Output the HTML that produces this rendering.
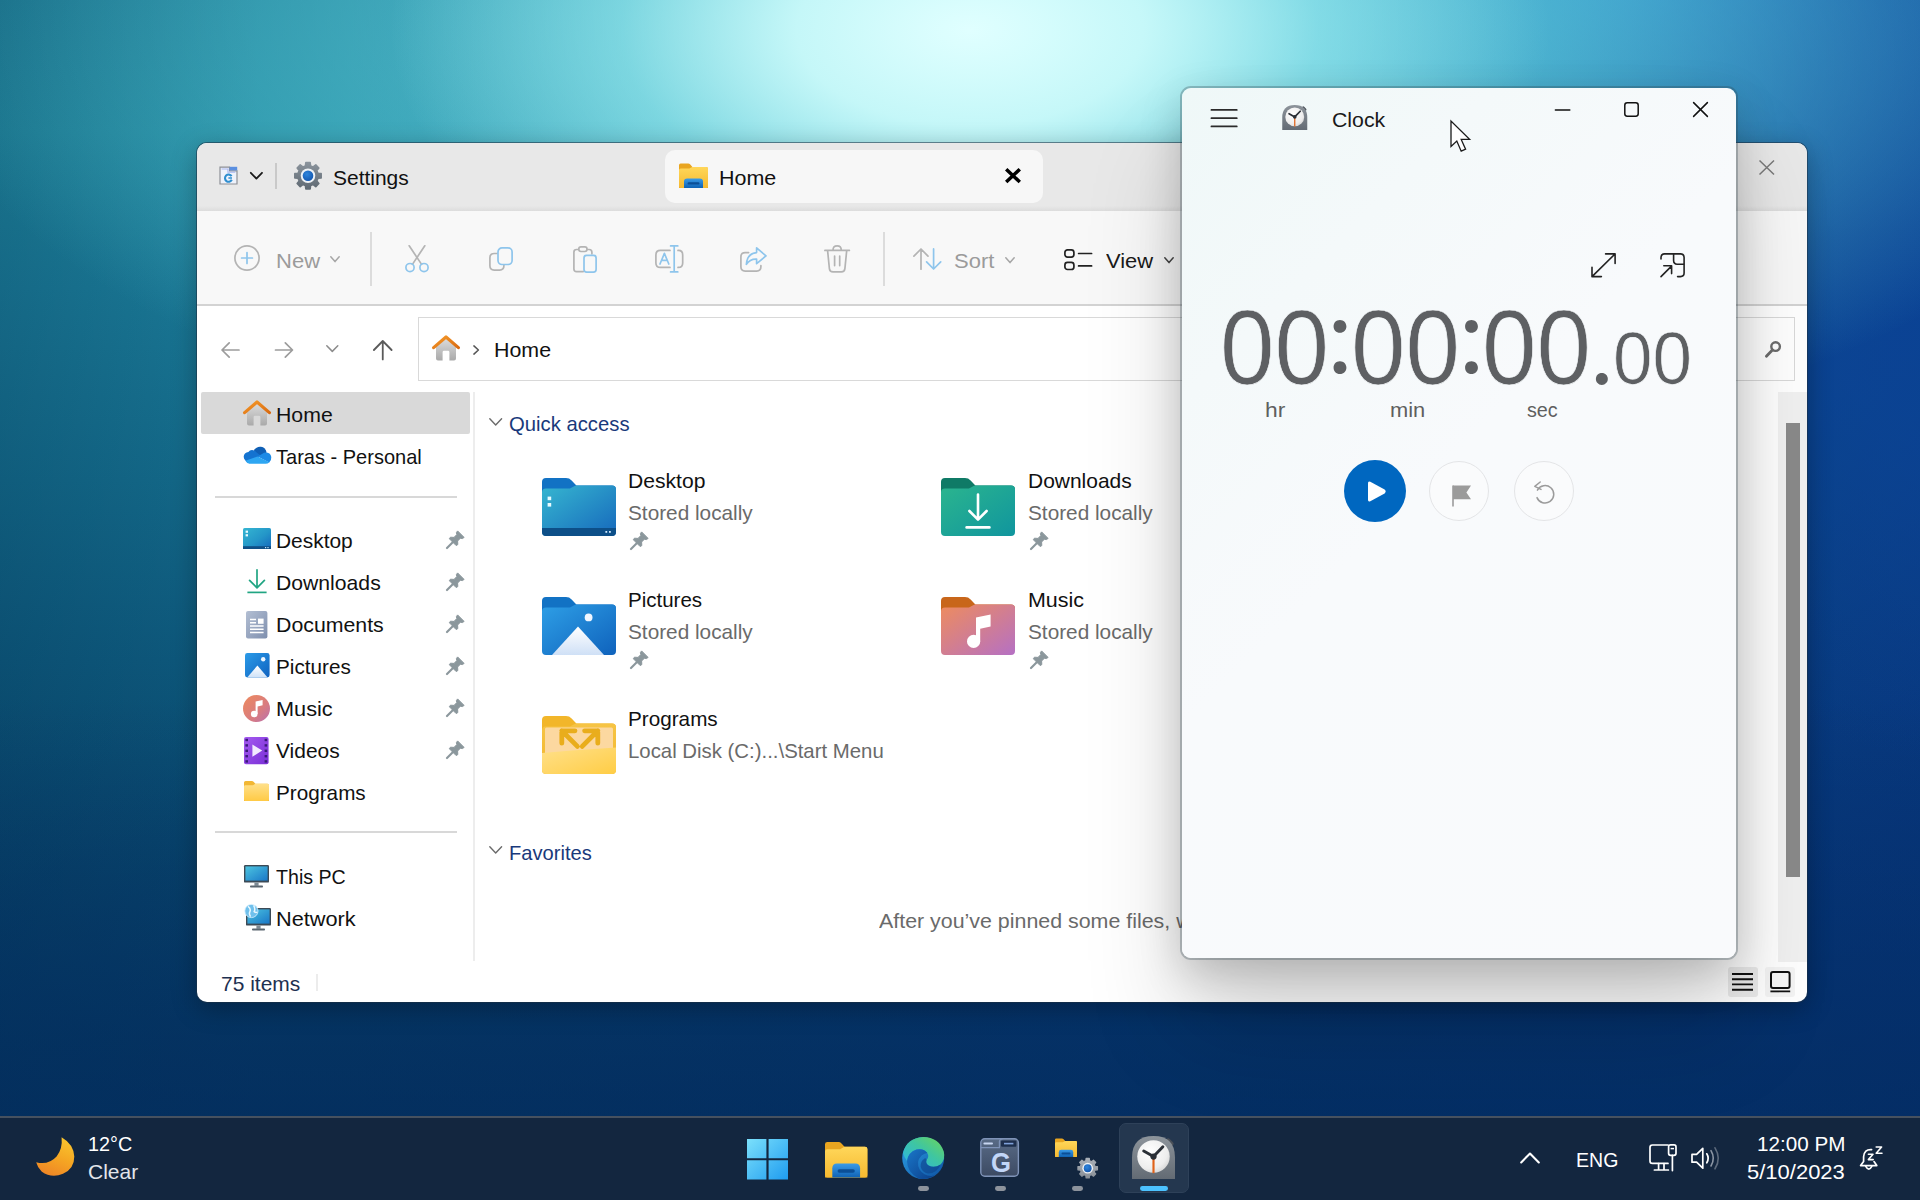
<!DOCTYPE html><html lang="en"><head><meta charset="utf-8"><title>Desktop</title><style>
*{box-sizing:border-box;margin:0;padding:0}
html,body{width:1920px;height:1200px;overflow:hidden;background:#03315e}
body{position:relative;font-family:"Liberation Sans",sans-serif}
.a{position:absolute}
.pg{position:absolute;width:1920px;height:1200px}
.t{position:absolute;white-space:nowrap;line-height:1;transform-origin:0 0;font-family:"Liberation Sans",sans-serif}
svg{position:absolute;overflow:visible}
#wall{left:0;top:0;width:1920px;height:1200px;
 background:
  radial-gradient(ellipse 580px 320px at 970px 30px, rgba(224,255,255,1) 0%, rgba(205,251,251,.92) 30%, rgba(160,238,242,.55) 60%, rgba(120,220,230,0) 100%),
  radial-gradient(ellipse 1120px 450px at 1040px 40px, rgba(125,228,234,.95) 0%, rgba(95,205,218,.72) 42%, rgba(60,170,195,0) 100%),
  radial-gradient(ellipse 470px 560px at 2000px 210px, rgba(10,66,152,.92) 0%, rgba(11,68,154,.62) 45%, rgba(12,72,156,0) 100%),
  radial-gradient(ellipse 620px 260px at 1640px -10px, rgba(44,150,232,.62) 0%, rgba(44,150,232,.35) 50%, rgba(44,150,232,0) 100%),
  linear-gradient(to bottom, rgba(3,44,96,0) 0%, rgba(3,44,96,0) 58%, rgba(3,46,98,.55) 82%, rgba(3,44,94,.85) 100%),
  linear-gradient(to right, rgba(6,44,128,0) 0%, rgba(6,44,128,0) 18%, rgba(6,44,128,.30) 50%, rgba(7,48,132,.64) 86%, rgba(6,46,128,.74) 100%),
  linear-gradient(to right, rgba(0,40,70,.22) 0, rgba(0,40,70,0) 260px),
  linear-gradient(to bottom, #1d7f98 0%, #20889f 11%, #1b7b98 24%, #146b8b 40%, #0e5a7e 55%, #0a4a70 70%, #073c63 85%, #05335b 100%);}
#exp{left:197px;top:143px;width:1610px;height:859px;border-radius:10px;background:#fff;overflow:hidden}
#expsh{left:197px;top:143px;width:1610px;height:859px;border-radius:10px;
 box-shadow:0 0 0 1px rgba(30,50,70,.55),0 6px 26px rgba(0,0,0,.30)}
#clk{left:1182px;top:88px;width:554px;height:870px;border-radius:9px;overflow:hidden;
 background:linear-gradient(135deg,#eff8f8 0%,#f4f9fa 22%,#f8fafc 45%,#f9fafc 100%)}
#clksh{left:1182px;top:88px;width:554px;height:870px;border-radius:9px;
 box-shadow:0 0 0 2px rgba(50,70,78,.30),0 14px 44px rgba(0,0,0,.20),0 70px 100px rgba(0,0,0,.16)}
#tb{left:0;top:1116px;width:1920px;height:84px;background:#13263f;border-top:2px solid #46515f;overflow:hidden}
</style></head><body><div class="a" id="wall"></div><div class="a" id="expsh"></div><div class="a" id="exp"><div class="pg" style="left:-197px;top:-143px"><div class="a" style="left:197px;top:143px;width:1610px;height:67px;background:#e8e8e8"></div>
<div class="a" style="left:197px;top:206px;width:1610px;height:5px;background:linear-gradient(#e8e8e8,#dcdcdc)"></div>
<div class="a" style="left:197px;top:211px;width:1610px;height:93px;background:#f8f8f8"></div>
<div class="a" style="left:197px;top:304px;width:1610px;height:2px;background:#d3d3d3"></div>
<div class="a" style="left:665px;top:150px;width:378px;height:53px;border-radius:10px;background:#f7f7f7"></div>
<span class="t" style="left:333.03px;top:167.12px;font-size:21.00px;color:#111;transform:scaleX(0.9979);">Settings</span>
<span class="t" style="left:718.73px;top:166.82px;font-size:21.00px;color:#111;transform:scaleX(1.0214);">Home</span>
<span class="t" style="left:275.53px;top:249.72px;font-size:21.00px;color:#9b9b9b;transform:scaleX(1.0479);">New</span>
<span class="t" style="left:954.43px;top:250.02px;font-size:21.00px;color:#9b9b9b;transform:scaleX(1.0471);">Sort</span>
<span class="t" style="left:1106.03px;top:250.02px;font-size:21.00px;color:#1a1a1a;transform:scaleX(1.0441);">View</span>
<div class="a" style="left:370px;top:232px;width:1.5px;height:54px;background:#dcdcdc"></div>
<div class="a" style="left:883px;top:232px;width:1.5px;height:54px;background:#dcdcdc"></div>
<div class="a" style="left:418px;top:317px;width:1377px;height:64px;border:1px solid #d9d9d9;background:#fff"></div>
<span class="t" style="left:494.28px;top:339.22px;font-size:21.00px;color:#111;transform:scaleX(1.0178);">Home</span>
<div class="a" style="left:201px;top:392px;width:269px;height:42px;background:#d9d9d9;border-radius:2px"></div>
<div class="a" style="left:215px;top:496px;width:242px;height:2px;background:#d8d8d8"></div>
<div class="a" style="left:215px;top:831px;width:242px;height:2px;background:#d8d8d8"></div>
<div class="a" style="left:473px;top:392px;width:1.5px;height:569px;background:#ededed"></div>
<span class="t" style="left:275.83px;top:403.92px;font-size:21.00px;color:#111;transform:scaleX(1.0125);">Home</span>
<span class="t" style="left:275.83px;top:445.52px;font-size:21.00px;color:#111;transform:scaleX(0.9531);">Taras - Personal</span>
<span class="t" style="left:275.83px;top:529.72px;font-size:21.00px;color:#111;transform:scaleX(0.9959);">Desktop</span>
<span class="t" style="left:275.83px;top:571.72px;font-size:21.00px;color:#111;transform:scaleX(1.0079);">Downloads</span>
<span class="t" style="left:275.83px;top:613.72px;font-size:21.00px;color:#111;transform:scaleX(1.0142);">Documents</span>
<span class="t" style="left:275.83px;top:655.72px;font-size:21.00px;color:#111;transform:scaleX(0.9851);">Pictures</span>
<span class="t" style="left:275.83px;top:697.72px;font-size:21.00px;color:#111;transform:scaleX(1.0344);">Music</span>
<span class="t" style="left:275.83px;top:739.72px;font-size:21.00px;color:#111;transform:scaleX(0.9982);">Videos</span>
<span class="t" style="left:275.83px;top:781.72px;font-size:21.00px;color:#111;transform:scaleX(0.9857);">Programs</span>
<span class="t" style="left:275.83px;top:865.72px;font-size:21.00px;color:#111;transform:scaleX(0.9336);">This PC</span>
<span class="t" style="left:275.83px;top:907.72px;font-size:21.00px;color:#111;transform:scaleX(1.0350);">Network</span>
<span class="t" style="left:509.33px;top:413.42px;font-size:21.00px;color:#19397b;transform:scaleX(0.9652);">Quick access</span>
<span class="t" style="left:509.23px;top:841.62px;font-size:21.00px;color:#19397b;transform:scaleX(0.9580);">Favorites</span>
<span class="t" style="left:628.33px;top:470.12px;font-size:21.00px;color:#111;transform:scaleX(1.0050);">Desktop</span>
<span class="t" style="left:628.33px;top:502.12px;font-size:21.00px;color:#6a6a6a;transform:scaleX(0.9894);">Stored locally</span>
<span class="t" style="left:1027.73px;top:470.12px;font-size:21.00px;color:#111;transform:scaleX(0.9983);">Downloads</span>
<span class="t" style="left:1027.73px;top:502.12px;font-size:21.00px;color:#6a6a6a;transform:scaleX(0.9894);">Stored locally</span>
<span class="t" style="left:628.33px;top:589.12px;font-size:21.00px;color:#111;transform:scaleX(0.9772);">Pictures</span>
<span class="t" style="left:628.33px;top:621.12px;font-size:21.00px;color:#6a6a6a;transform:scaleX(0.9894);">Stored locally</span>
<span class="t" style="left:1027.73px;top:589.12px;font-size:21.00px;color:#111;transform:scaleX(1.0216);">Music</span>
<span class="t" style="left:1027.73px;top:621.12px;font-size:21.00px;color:#6a6a6a;transform:scaleX(0.9894);">Stored locally</span>
<span class="t" style="left:628.33px;top:708.12px;font-size:21.00px;color:#111;transform:scaleX(0.9857);">Programs</span>
<span class="t" style="left:628.33px;top:740.12px;font-size:21.00px;color:#6a6a6a;transform:scaleX(0.9696);">Local Disk (C:)...\Start Menu</span>
<span class="t" style="left:879.03px;top:910.22px;font-size:21.00px;color:#6a6a6a;transform:scaleX(1.0182);">After you’ve pinned some files, we’ll show them here.</span>
<span class="t" style="left:220.53px;top:972.72px;font-size:21.00px;color:#1d3050;transform:scaleX(0.9994);">75 items</span>
<div class="a" style="left:316px;top:974px;width:1.5px;height:17px;background:#ececec"></div>
<div class="a" style="left:1778px;top:392px;width:29px;height:570px;background:#f1f1f1"></div>
<div class="a" style="left:1785.5px;top:422.5px;width:14.5px;height:454.5px;background:#8a8a8a"></div>
<svg style="left:219px;top:166px" width="19" height="19" viewBox="0 0 19 19" ><path d="M1 1.2h9.5v3.6H18V18H1z" fill="#eef2fb" stroke="#8d8f96" stroke-width="1.2"/><rect x="10.6" y="0.8" width="7.6" height="3.6" fill="#5b8fe0"/><path d="M2.6 3h6.3v3.3h7.4" fill="none" stroke="#a9b8f2" stroke-width="1.1"/><path d="M12.6 10.2a3.6 3.6 0 1 0 .2 3.6" fill="none" stroke="#2f8fd0" stroke-width="2.1"/><path d="M9.4 12h3.6" stroke="#2f8fd0" stroke-width="1.6"/></svg>
<svg style="left:250px;top:172px" width="13" height="8" viewBox="0 0 13 8" ><path d="M0.8 0.8 6.4 6.6 12 0.8" fill="none" stroke="#1a1a1a" stroke-width="1.8" stroke-linecap="round" stroke-linejoin="round"/></svg>
<div class="a" style="left:275px;top:163px;width:1.6px;height:26px;background:#c9c9c9"></div>
<svg style="left:294px;top:162px" width="28" height="27.5" viewBox="0 0 28 28" ><defs><linearGradient id="gg1" x1="0" y1="0" x2="0" y2="1"><stop offset="0" stop-color="#8a939c"/><stop offset="1" stop-color="#5f6972"/></linearGradient><radialGradient id="gg2" cx=".4" cy=".35" r=".8"><stop offset="0" stop-color="#2f86dd"/><stop offset="1" stop-color="#0f4fa8"/></radialGradient></defs><path d="M11.37 3.94 L11.79 0.58 L16.21 0.58 L16.63 3.94 L19.26 5.03 L21.92 2.95 L25.05 6.08 L22.97 8.74 L24.06 11.37 L27.42 11.79 L27.42 16.21 L24.06 16.63 L22.97 19.26 L25.05 21.92 L21.92 25.05 L19.26 22.97 L16.63 24.06 L16.21 27.42 L11.79 27.42 L11.37 24.06 L8.74 22.97 L6.08 25.05 L2.95 21.92 L5.03 19.26 L3.94 16.63 L0.58 16.21 L0.58 11.79 L3.94 11.37 L5.03 8.74 L2.95 6.08 L6.08 2.95 L8.74 5.03Z" fill="url(#gg1)" stroke="url(#gg1)" stroke-width="1.6" stroke-linejoin="round"/><circle cx="14" cy="14" r="7.4" fill="#eef2f6"/><circle cx="14" cy="14" r="5.4" fill="url(#gg2)"/></svg>
<svg style="left:679px;top:163px" width="29" height="25" viewBox="0 0 29 25" ><defs><linearGradient id="fe1" x1="0" y1="0" x2="0" y2="1"><stop offset="0" stop-color="#ffd75a"/><stop offset="1" stop-color="#f6b930"/></linearGradient><linearGradient id="fe2" x1="0" y1="0" x2="0" y2="1"><stop offset="0" stop-color="#3a9be8"/><stop offset="1" stop-color="#0f62b4"/></linearGradient></defs><path d="M0 2.2Q0 .6 1.6 .6H9.2Q10.4 .6 11.3 1.6L13.4 3.9H27.2Q29 3.9 29 5.6V25H0Z" fill="#e9a520"/><path d="M0 7.2Q0 5.6 1.6 5.6H10.4L13.2 3.9H27.4Q29 3.9 29 5.5V23.4Q29 25 27.4 25H1.6Q0 25 0 23.4Z" fill="url(#fe1)"/><path d="M5 25V18.6Q5 15.4 8.2 15.4H20.8Q24 15.4 24 18.6V25Z" fill="url(#fe2)"/><rect x="8.6" y="19.2" width="11.8" height="2.4" rx="1.2" fill="#0b4f97"/></svg>
<svg style="left:1004.6px;top:167.8px" width="16" height="15.2" viewBox="0 0 16 15.2" ><path d="M1.2 1.2 14.8 14M14.8 1.2 1.2 14" stroke="#000" stroke-width="3.5" stroke-linecap="butt"/></svg>
<svg style="left:1758.75px;top:160px" width="15.5" height="15" viewBox="0 0 15.5 15" ><path d="M.5 .5 15 14.5M15 .5 .5 14.5" stroke="#7a7a7a" stroke-width="1.5"/></svg>
<svg style="left:234px;top:245px" width="26" height="26" viewBox="0 0 26 26" ><circle cx="13" cy="13" r="12.1" fill="none" stroke="#b4b4b4" stroke-width="1.7"/><path d="M13 7.6V18.4M7.6 13H18.4" stroke="#8ec5ec" stroke-width="1.7" stroke-linecap="round"/></svg>
<svg style="left:330px;top:256px" width="10" height="7" viewBox="0 0 10 7" ><path d="M.8 .8 5 5.6 9.2 .8" fill="none" stroke="#a6a6a6" stroke-width="1.5" stroke-linecap="round" stroke-linejoin="round"/></svg>
<svg style="left:405px;top:245px" width="24" height="27.5" viewBox="0 0 24 27.5" ><path d="M4.2 .8 16.6 19.4M19.8 .8 7.4 19.4" stroke="#b4b4b4" stroke-width="1.7" stroke-linecap="round"/><circle cx="5" cy="22.6" r="4.1" fill="none" stroke="#8ec5ec" stroke-width="1.7"/><circle cx="19" cy="22.6" r="4.1" fill="none" stroke="#8ec5ec" stroke-width="1.7"/></svg>
<svg style="left:489px;top:247px" width="24" height="24" viewBox="0 0 24 24" ><path d="M8 6.5H5.2Q.9 6.5 .9 10.8V18.8Q.9 23.1 5.2 23.1H10.6Q14.9 23.1 14.9 18.8V18.2" fill="none" stroke="#b4b4b4" stroke-width="1.7" stroke-linecap="round"/><rect x="9" y=".9" width="14.1" height="16.6" rx="4" fill="none" stroke="#8ec5ec" stroke-width="1.7"/></svg>
<svg style="left:573px;top:245.5px" width="24" height="27" viewBox="0 0 24 27" ><path d="M10.2 25.6H3.6Q.9 25.6 .9 22.9V6.2Q.9 3.5 3.6 3.5H5.6M14 3.5H16.2Q18.9 3.5 18.9 6.2V7.8" fill="none" stroke="#b4b4b4" stroke-width="1.7" stroke-linecap="round"/><rect x="5.8" y=".9" width="8.2" height="4.6" rx="2.2" fill="#f8f8f8" stroke="#b4b4b4" stroke-width="1.7"/><rect x="11" y="9.4" width="12.1" height="16.7" rx="2.6" fill="none" stroke="#8ec5ec" stroke-width="1.7"/></svg>
<svg style="left:654.6px;top:245px" width="28.6" height="27.8" viewBox="0 0 28.6 27.8" ><path d="M15 5.4H5.4Q.9 5.4 .9 9.9V17.9Q.9 22.4 5.4 22.4H15M23 5.4H23.4Q27.7 5.4 27.7 9.9V17.9Q27.7 22.4 23.4 22.4H23" fill="none" stroke="#b4b4b4" stroke-width="1.7" stroke-linecap="round"/><path d="M19.2 .9V26.9M15.6 .9H22.8M15.6 26.9H22.8" stroke="#8ec5ec" stroke-width="1.7" stroke-linecap="round"/><path d="M5 19 9.4 8.4 13.8 19M6.6 15.4H12.2" fill="none" stroke="#8ec5ec" stroke-width="1.7" stroke-linecap="round" stroke-linejoin="round"/></svg>
<svg style="left:740px;top:246.5px" width="27" height="25" viewBox="0 0 27 25" ><path d="M8.6 5.6H5.2Q.9 5.6 .9 9.9V19.8Q.9 24.1 5.2 24.1H16.6Q20.9 24.1 20.9 19.8V18.6" fill="none" stroke="#b4b4b4" stroke-width="1.7" stroke-linecap="round"/><path d="M16.6 .9 26 8.9 16.6 16.7V12.2Q10 11.8 6.4 17.4Q7 6.6 16.6 5.6Z" fill="none" stroke="#8ec5ec" stroke-width="1.7" stroke-linejoin="round"/></svg>
<svg style="left:823.7px;top:245px" width="26.3" height="27.8" viewBox="0 0 26.3 27.8" ><path d="M.9 5.4H25.4M9 5.2Q9 .9 13.15 .9Q17.3 .9 17.3 5.2M3.6 5.6 5.4 23.6Q5.7 26.9 9 26.9H17.3Q20.6 26.9 20.9 23.6L22.7 5.6M10.6 11V20.6M15.7 11V20.6" fill="none" stroke="#b4b4b4" stroke-width="1.7" stroke-linecap="round"/></svg>
<svg style="left:912.7px;top:248px" width="28.6" height="22" viewBox="0 0 28.6 22" ><path d="M8 21.2V1.4M.9 8.2 8 1 15 8.2" fill="none" stroke="#b4b4b4" stroke-width="1.7" stroke-linecap="round" stroke-linejoin="round"/><path d="M20.6 .9V20.6M13.6 13.8 20.6 21 27.7 13.8" fill="none" stroke="#8ec5ec" stroke-width="1.7" stroke-linecap="round" stroke-linejoin="round"/></svg>
<svg style="left:1005px;top:256.5px" width="10" height="7" viewBox="0 0 10 7" ><path d="M.8 .8 5 5.6 9.2 .8" fill="none" stroke="#a6a6a6" stroke-width="1.5" stroke-linecap="round" stroke-linejoin="round"/></svg>
<svg style="left:1064.4px;top:248.6px" width="28.6" height="21.4" viewBox="0 0 28.6 21.4" ><rect x=".9" y=".9" width="9" height="7.2" rx="2.6" fill="none" stroke="#222" stroke-width="1.7"/><rect x=".9" y="13.3" width="9" height="7.2" rx="2.6" fill="none" stroke="#222" stroke-width="1.7"/><path d="M14.6 4.5H27.6M14.6 16.9H27.6" stroke="#222" stroke-width="1.7" stroke-linecap="round"/></svg>
<svg style="left:1164.4px;top:256.5px" width="10" height="7" viewBox="0 0 10 7" ><path d="M.8 .8 5 5.6 9.2 .8" fill="none" stroke="#444" stroke-width="1.5" stroke-linecap="round" stroke-linejoin="round"/></svg>
<svg style="left:221px;top:341.5px" width="18.5" height="16" viewBox="0 0 18.5 16" ><path d="M18 8H1.2M8.2 .8 1 8 8.2 15.2" fill="none" stroke="#9c9c9c" stroke-width="1.7" stroke-linecap="round" stroke-linejoin="round"/></svg>
<svg style="left:275px;top:341.5px" width="18.5" height="16" viewBox="0 0 18.5 16" ><path d="M.5 8H17.3M10.3 .8 17.5 8 10.3 15.2" fill="none" stroke="#9c9c9c" stroke-width="1.7" stroke-linecap="round" stroke-linejoin="round"/></svg>
<svg style="left:326px;top:345px" width="12.6" height="7.4" viewBox="0 0 12.6 7.4" ><path d="M.8 .8 6.3 6.4 11.8 .8" fill="none" stroke="#8c8c8c" stroke-width="1.5" stroke-linecap="round" stroke-linejoin="round"/></svg>
<svg style="left:373px;top:340px" width="19.5" height="20" viewBox="0 0 19.5 20" ><path d="M9.75 19.4V1.4M.9 10 9.75 1 18.6 10" fill="none" stroke="#5a5a5a" stroke-width="1.8" stroke-linecap="round" stroke-linejoin="round"/></svg>
<svg style="left:473px;top:345px" width="6.5" height="10" viewBox="0 0 6.5 10" ><path d="M.9 .9 5.4 5 .9 9.1" fill="none" stroke="#555" stroke-width="1.5" stroke-linecap="round" stroke-linejoin="round"/></svg>
<svg style="left:1764.5px;top:341px" width="16.3" height="16.5" viewBox="0 0 16.3 16.5" ><circle cx="10.6" cy="5.6" r="4.3" fill="none" stroke="#6c6c6c" stroke-width="2.4"/><path d="M7.4 9 1.4 15.2" stroke="#6c6c6c" stroke-width="2.8" stroke-linecap="round"/></svg>
<svg style="left:432px;top:335px" width="28" height="26" viewBox="0 0 28 26" ><defs><linearGradient id="hba" x1="0" y1="0" x2="0" y2="1"><stop offset="0" stop-color="#dcdcdc"/><stop offset="1" stop-color="#a9a9a9"/></linearGradient><linearGradient id="hra" x1="0" y1="0" x2="1" y2="1"><stop offset="0" stop-color="#f59a2a"/><stop offset="1" stop-color="#d96a10"/></linearGradient></defs><path d="M4 12 14 3.4 24 12V23.6Q24 25.6 22 25.6H17.4V17.2Q17.4 15.8 16 15.8H12Q10.6 15.8 10.6 17.2V25.6H6Q4 25.6 4 23.6Z" fill="url(#hba)"/><path d="M1.6 12.6 14 2 26.4 12.6" fill="none" stroke="url(#hra)" stroke-width="3.2" stroke-linecap="round" stroke-linejoin="round"/></svg>
<svg style="left:242.8px;top:399.6px" width="28" height="26" viewBox="0 0 28 26" ><defs><linearGradient id="hbb" x1="0" y1="0" x2="0" y2="1"><stop offset="0" stop-color="#dcdcdc"/><stop offset="1" stop-color="#a9a9a9"/></linearGradient><linearGradient id="hrb" x1="0" y1="0" x2="1" y2="1"><stop offset="0" stop-color="#f59a2a"/><stop offset="1" stop-color="#d96a10"/></linearGradient></defs><path d="M4 12 14 3.4 24 12V23.6Q24 25.6 22 25.6H17.4V17.2Q17.4 15.8 16 15.8H12Q10.6 15.8 10.6 17.2V25.6H6Q4 25.6 4 23.6Z" fill="url(#hbb)"/><path d="M1.6 12.6 14 2 26.4 12.6" fill="none" stroke="url(#hrb)" stroke-width="3.2" stroke-linecap="round" stroke-linejoin="round"/></svg>
<svg style="left:242.8px;top:445.5px" width="28.4" height="18" viewBox="0 0 28.4 18" ><path d="M10.6 5.2Q13.2 .2 18 .8Q22.6 1.4 23.6 6.6L14 12.6Z" fill="#0f5fb5"/><path d="M2.4 14.6Q-.8 11 2 7.6Q3.4 6 5.4 6Q7 3.6 10.2 4.2Q12.2 4.6 13.6 6.4L17.6 9.4 6.6 17.2Q3.8 17 2.4 14.6Z" fill="#1473d0"/><path d="M23.6 6.6Q27.6 7 28.3 11Q28.6 14.2 26.2 16.4L14.6 10.6 19 8Q21.2 6.4 23.6 6.6Z" fill="#1c8ae6"/><path d="M6.6 17.8Q4 17.8 2.4 14.8L14.4 10.4 26.4 16.2Q24.8 17.8 22.6 17.8Z" fill="#2ea6f2"/></svg>
<svg style="left:242.8px;top:528.3px" width="28" height="21" viewBox="0 0 28 21" ><defs><linearGradient id="dk1" x1="0" y1="0" x2="1" y2="1"><stop offset="0" stop-color="#35b6d2"/><stop offset=".55" stop-color="#2496c8"/><stop offset="1" stop-color="#1467bd"/></linearGradient></defs><rect x="0" y="0" width="28" height="21" rx="1.6" fill="url(#dk1)"/><rect x="0" y="18.2" width="28" height="2.8" fill="#0f4f86"/><rect x="2.6" y="2.6" width="2.4" height="2.2" fill="#e8fbff"/><rect x="2.6" y="6.2" width="2.4" height="2.2" fill="#e8fbff"/><rect x="22" y="19" width="1.2" height="1.2" fill="#bfe6ff"/><rect x="24.4" y="19" width="1.2" height="1.2" fill="#bfe6ff"/></svg>
<svg style="left:246.8px;top:568.8px" width="20" height="24.5" viewBox="0 0 20 24.5" ><path d="M10 .8V18.4M2.6 11.4 10 18.8 17.4 11.4" fill="none" stroke="#21a583" stroke-width="1.7" stroke-linecap="round" stroke-linejoin="round"/><path d="M.4 23.4H19.6" stroke="#21a583" stroke-width="1.7"/></svg>
<svg style="left:246px;top:610.6px" width="21.4" height="27.4" viewBox="0 0 21.4 27.4" ><defs><linearGradient id="dc1" x1="0" y1="0" x2="1" y2="1"><stop offset="0" stop-color="#b3bfd3"/><stop offset="1" stop-color="#7f8fae"/></linearGradient></defs><rect width="21.4" height="27.4" rx="2" fill="url(#dc1)"/><path d="M4 8.6H10M4 11.8H10M4 15H17.6M4 18.2H17.6M4 21.4H17.6" stroke="#fff" stroke-width="1.5"/><rect x="12" y="7.6" width="5.6" height="5.2" fill="#fff"/></svg>
<svg style="left:244.6px;top:653.2px" width="24.6" height="24.4" viewBox="0 0 24.6 24.4" ><defs><linearGradient id="pc1" x1="0" y1="0" x2="1" y2="1"><stop offset="0" stop-color="#2b9be8"/><stop offset="1" stop-color="#0f62c0"/></linearGradient><linearGradient id="pc2" x1="0" y1="0" x2="0" y2="1"><stop offset="0" stop-color="#ffffff"/><stop offset="1" stop-color="#cfe2f8"/></linearGradient></defs><rect width="24.6" height="24.4" rx="2.4" fill="url(#pc1)"/><path d="M2.2 24.4 12.4 12.6 22.6 24.4Z" fill="url(#pc2)"/><circle cx="18.2" cy="6.2" r="2.2" fill="#eef6ff"/></svg>
<svg style="left:243px;top:694.6px" width="27" height="27" viewBox="0 0 27 27" ><defs><linearGradient id="mu1" x1="0" y1="0" x2="1" y2="1"><stop offset="0" stop-color="#ee8a5c"/><stop offset=".6" stop-color="#d97c80"/><stop offset="1" stop-color="#b871b0"/></linearGradient></defs><circle cx="13.5" cy="13.5" r="13.5" fill="url(#mu1)"/><circle cx="11.2" cy="19" r="3.3" fill="#fff"/><path d="M12.6 19V6.4L19.6 5V10.2L14.6 11.4V19Z" fill="#fff"/></svg>
<svg style="left:244.4px;top:736.6px" width="24.6" height="27.2" viewBox="0 0 24.6 27.2" ><defs><linearGradient id="vd1" x1="0" y1="0" x2="1" y2="1"><stop offset="0" stop-color="#a45af0"/><stop offset="1" stop-color="#7a2fd6"/></linearGradient></defs><rect width="24.6" height="27.2" rx="2" fill="url(#vd1)"/><rect x="1.4" y="1.8" width="2.6" height="2.4" fill="#3a1a7a"/><rect x="20.6" y="1.8" width="2.6" height="2.4" fill="#3a1a7a"/><rect x="1.4" y="7.2" width="2.6" height="2.4" fill="#3a1a7a"/><rect x="20.6" y="7.2" width="2.6" height="2.4" fill="#3a1a7a"/><rect x="1.4" y="12.6" width="2.6" height="2.4" fill="#3a1a7a"/><rect x="20.6" y="12.6" width="2.6" height="2.4" fill="#3a1a7a"/><rect x="1.4" y="18" width="2.6" height="2.4" fill="#3a1a7a"/><rect x="20.6" y="18" width="2.6" height="2.4" fill="#3a1a7a"/><rect x="1.4" y="23.2" width="2.6" height="2.4" fill="#3a1a7a"/><rect x="20.6" y="23.2" width="2.6" height="2.4" fill="#3a1a7a"/><path d="M8.4 7.4 18.2 13.6 8.4 19.8Z" fill="#f2eaff"/></svg>
<svg style="left:244.4px;top:781px" width="25" height="20" viewBox="0 0 25 20" ><defs><linearGradient id="yfa" x1="0" y1="0" x2="0" y2="1"><stop offset="0" stop-color="#ffe08a"/><stop offset="1" stop-color="#ffca45"/></linearGradient></defs><path d="M0 1.6Q0 0 1.6 0H7.8Q9 0 9.8 .9L11.4 2.8H23.4Q25 2.8 25 4.4V20H0Z" fill="#f2b734"/><path d="M0 5.6Q0 4.2 1.4 4.2H9L11.4 2.8H23.6Q25 2.8 25 4.2V18.6Q25 20 23.6 20H1.4Q0 20 0 18.6Z" fill="url(#yfa)"/></svg>
<svg style="left:244px;top:865px" width="25" height="22.6" viewBox="0 0 25 22.6" ><defs><linearGradient id="moa" x1="0" y1="0" x2="1" y2="1"><stop offset="0" stop-color="#4cc4e0"/><stop offset="1" stop-color="#1a78c8"/></linearGradient></defs><rect x="0" y="0" width="25" height="17.6" rx="1.2" fill="#3c4a56"/><rect x="1.4" y="1.4" width="22.2" height="14.2" fill="url(#moa)"/><rect x="10.4" y="17.6" width="4.2" height="3.2" fill="#7d8a94"/><rect x="6" y="20.6" width="13" height="2" rx=".8" fill="#5a6670"/></svg>
<svg style="left:245.6px;top:908px" width="25" height="22.6" viewBox="0 0 25 22.6" ><defs><linearGradient id="mob" x1="0" y1="0" x2="1" y2="1"><stop offset="0" stop-color="#4cc4e0"/><stop offset="1" stop-color="#1a78c8"/></linearGradient></defs><rect x="0" y="0" width="25" height="17.6" rx="1.2" fill="#3c4a56"/><rect x="1.4" y="1.4" width="22.2" height="14.2" fill="url(#mob)"/><rect x="10.4" y="17.6" width="4.2" height="3.2" fill="#7d8a94"/><rect x="6" y="20.6" width="13" height="2" rx=".8" fill="#5a6670"/><circle cx="5.4" cy="3" r="6.6" fill="#6fc0ec" stroke="#d8f0ff" stroke-width=".8"/><path d="M2 -1.6Q5 .4 4 3.4Q2.6 6 4.6 8.6M7.6 -2.6Q9.6 1 8.2 3.6Q10 5 11.2 4" fill="none" stroke="#e9f8ff" stroke-width="1.5"/></svg>
<svg style="left:446px;top:529.9px" width="19" height="19" viewBox="0 0 19 19" ><g fill="#8b979c" stroke="#8b979c" stroke-linejoin="round"><path d="M11.6 .9 18.1 7.4 16.4 8.6 14.4 8.2 11.6 11 11.8 14.6 10.2 15.6 3.4 8.8 4.4 7.2 8 7.4 10.8 4.6 10.4 2.6Z" stroke-width="1"/><path d="M7 12 1 18" stroke-width="2.2" stroke-linecap="round"/></g></svg>
<svg style="left:446px;top:571.9px" width="19" height="19" viewBox="0 0 19 19" ><g fill="#8b979c" stroke="#8b979c" stroke-linejoin="round"><path d="M11.6 .9 18.1 7.4 16.4 8.6 14.4 8.2 11.6 11 11.8 14.6 10.2 15.6 3.4 8.8 4.4 7.2 8 7.4 10.8 4.6 10.4 2.6Z" stroke-width="1"/><path d="M7 12 1 18" stroke-width="2.2" stroke-linecap="round"/></g></svg>
<svg style="left:446px;top:613.9px" width="19" height="19" viewBox="0 0 19 19" ><g fill="#8b979c" stroke="#8b979c" stroke-linejoin="round"><path d="M11.6 .9 18.1 7.4 16.4 8.6 14.4 8.2 11.6 11 11.8 14.6 10.2 15.6 3.4 8.8 4.4 7.2 8 7.4 10.8 4.6 10.4 2.6Z" stroke-width="1"/><path d="M7 12 1 18" stroke-width="2.2" stroke-linecap="round"/></g></svg>
<svg style="left:446px;top:655.9px" width="19" height="19" viewBox="0 0 19 19" ><g fill="#8b979c" stroke="#8b979c" stroke-linejoin="round"><path d="M11.6 .9 18.1 7.4 16.4 8.6 14.4 8.2 11.6 11 11.8 14.6 10.2 15.6 3.4 8.8 4.4 7.2 8 7.4 10.8 4.6 10.4 2.6Z" stroke-width="1"/><path d="M7 12 1 18" stroke-width="2.2" stroke-linecap="round"/></g></svg>
<svg style="left:446px;top:697.9px" width="19" height="19" viewBox="0 0 19 19" ><g fill="#8b979c" stroke="#8b979c" stroke-linejoin="round"><path d="M11.6 .9 18.1 7.4 16.4 8.6 14.4 8.2 11.6 11 11.8 14.6 10.2 15.6 3.4 8.8 4.4 7.2 8 7.4 10.8 4.6 10.4 2.6Z" stroke-width="1"/><path d="M7 12 1 18" stroke-width="2.2" stroke-linecap="round"/></g></svg>
<svg style="left:446px;top:739.9px" width="19" height="19" viewBox="0 0 19 19" ><g fill="#8b979c" stroke="#8b979c" stroke-linejoin="round"><path d="M11.6 .9 18.1 7.4 16.4 8.6 14.4 8.2 11.6 11 11.8 14.6 10.2 15.6 3.4 8.8 4.4 7.2 8 7.4 10.8 4.6 10.4 2.6Z" stroke-width="1"/><path d="M7 12 1 18" stroke-width="2.2" stroke-linecap="round"/></g></svg>
<svg style="left:630.4px;top:531.3px" width="19" height="19" viewBox="0 0 19 19" ><g fill="#8b979c" stroke="#8b979c" stroke-linejoin="round"><path d="M11.6 .9 18.1 7.4 16.4 8.6 14.4 8.2 11.6 11 11.8 14.6 10.2 15.6 3.4 8.8 4.4 7.2 8 7.4 10.8 4.6 10.4 2.6Z" stroke-width="1"/><path d="M7 12 1 18" stroke-width="2.2" stroke-linecap="round"/></g></svg>
<svg style="left:1029.8px;top:531.3px" width="19" height="19" viewBox="0 0 19 19" ><g fill="#8b979c" stroke="#8b979c" stroke-linejoin="round"><path d="M11.6 .9 18.1 7.4 16.4 8.6 14.4 8.2 11.6 11 11.8 14.6 10.2 15.6 3.4 8.8 4.4 7.2 8 7.4 10.8 4.6 10.4 2.6Z" stroke-width="1"/><path d="M7 12 1 18" stroke-width="2.2" stroke-linecap="round"/></g></svg>
<svg style="left:630.4px;top:650.3px" width="19" height="19" viewBox="0 0 19 19" ><g fill="#8b979c" stroke="#8b979c" stroke-linejoin="round"><path d="M11.6 .9 18.1 7.4 16.4 8.6 14.4 8.2 11.6 11 11.8 14.6 10.2 15.6 3.4 8.8 4.4 7.2 8 7.4 10.8 4.6 10.4 2.6Z" stroke-width="1"/><path d="M7 12 1 18" stroke-width="2.2" stroke-linecap="round"/></g></svg>
<svg style="left:1029.8px;top:650.3px" width="19" height="19" viewBox="0 0 19 19" ><g fill="#8b979c" stroke="#8b979c" stroke-linejoin="round"><path d="M11.6 .9 18.1 7.4 16.4 8.6 14.4 8.2 11.6 11 11.8 14.6 10.2 15.6 3.4 8.8 4.4 7.2 8 7.4 10.8 4.6 10.4 2.6Z" stroke-width="1"/><path d="M7 12 1 18" stroke-width="2.2" stroke-linecap="round"/></g></svg>
<svg style="left:489px;top:418.3px" width="13.4" height="8" viewBox="0 0 13.4 8" ><path d="M.8 .8 6.7 7 12.6 .8" fill="none" stroke="#6a6a6a" stroke-width="1.4" stroke-linecap="round" stroke-linejoin="round"/></svg>
<svg style="left:489px;top:846.2px" width="13.4" height="8" viewBox="0 0 13.4 8" ><path d="M.8 .8 6.7 7 12.6 .8" fill="none" stroke="#6a6a6a" stroke-width="1.4" stroke-linecap="round" stroke-linejoin="round"/></svg>
<svg style="left:542px;top:478px" width="74" height="58" viewBox="0 0 74 58" ><defs><linearGradient id="bfd" x1="0" y1="0" x2="1" y2="1"><stop offset="0" stop-color="#36b6d0"/><stop offset="1" stop-color="#1668bc"/></linearGradient></defs><path d="M0 4Q0 0 4 0H24Q27.4 0 29.6 2.4L34.4 7.6H70Q74 7.6 74 11.6V50H0Z" fill="#1272c4"/><path d="M0 14.4Q0 10.4 4 10.4H28L33.6 7.6H70Q74 7.6 74 11.6V54Q74 58 70 58H4Q0 58 0 54Z" fill="url(#bfd)"/><path d="M0 50H74V54Q74 58 70 58H4Q0 58 0 54Z" fill="#0d4f88"/><rect x="5.6" y="18.6" width="3.6" height="3.6" fill="#e9fbff"/><rect x="5.6" y="25" width="3.6" height="3.6" fill="#e9fbff"/><rect x="63.4" y="53" width="1.8" height="1.8" fill="#cfeaff"/><rect x="67" y="53" width="1.8" height="1.8" fill="#cfeaff"/></svg>
<svg style="left:941px;top:478px" width="74" height="58" viewBox="0 0 74 58" ><defs><linearGradient id="bfw" x1="0" y1="0" x2="1" y2="1"><stop offset="0" stop-color="#2bb58e"/><stop offset="1" stop-color="#10959e"/></linearGradient></defs><path d="M0 4Q0 0 4 0H24Q27.4 0 29.6 2.4L34.4 7.6H70Q74 7.6 74 11.6V50H0Z" fill="#0f7a66"/><path d="M0 14.4Q0 10.4 4 10.4H28L33.6 7.6H70Q74 7.6 74 11.6V54Q74 58 70 58H4Q0 58 0 54Z" fill="url(#bfw)"/><path d="M37 16.6V41M28.4 33 37 41.6 45.6 33" fill="none" stroke="#fff" stroke-width="2.6" stroke-linecap="round" stroke-linejoin="round"/><path d="M25.6 49.4H48.4" stroke="#fff" stroke-width="2.6" stroke-linecap="round"/></svg>
<svg style="left:542px;top:597px" width="74" height="58" viewBox="0 0 74 58" ><defs><linearGradient id="bfp" x1="0" y1="0" x2="1" y2="1"><stop offset="0" stop-color="#2e9fe6"/><stop offset="1" stop-color="#0f62bc"/></linearGradient></defs><path d="M0 4Q0 0 4 0H24Q27.4 0 29.6 2.4L34.4 7.6H70Q74 7.6 74 11.6V50H0Z" fill="#1272c4"/><path d="M0 14.4Q0 10.4 4 10.4H28L33.6 7.6H70Q74 7.6 74 11.6V54Q74 58 70 58H4Q0 58 0 54Z" fill="url(#bfp)"/><defs><linearGradient id="bfpm" x1="0" y1="0" x2="0" y2="1"><stop offset="0" stop-color="#fff"/><stop offset="1" stop-color="#cfe0f6"/></linearGradient></defs><path d="M10 58 36 29.6 62 58Z" fill="url(#bfpm)"/><circle cx="46.6" cy="20.4" r="3.9" fill="#f0f6ff"/></svg>
<svg style="left:941px;top:597px" width="74" height="58" viewBox="0 0 74 58" ><defs><linearGradient id="bfm" x1="0" y1="0" x2="1" y2="1"><stop offset="0" stop-color="#ee8c5e"/><stop offset="1" stop-color="#b570c4"/></linearGradient></defs><path d="M0 4Q0 0 4 0H24Q27.4 0 29.6 2.4L34.4 7.6H70Q74 7.6 74 11.6V50H0Z" fill="#c8661a"/><path d="M0 14.4Q0 10.4 4 10.4H28L33.6 7.6H70Q74 7.6 74 11.6V54Q74 58 70 58H4Q0 58 0 54Z" fill="url(#bfm)"/><circle cx="32.6" cy="44.4" r="6.6" fill="#fff"/><path d="M35 44.4V20.6L49.6 17.4V29.4L39.2 31.8V44.4Z" fill="#fff"/></svg>
<svg style="left:542px;top:716px" width="74" height="58" viewBox="0 0 74 58" ><defs><linearGradient id="bfg" x1="0" y1="0" x2="0" y2="1"><stop offset="0" stop-color="#f6c445"/><stop offset="1" stop-color="#f2b62a"/></linearGradient></defs><path d="M0 4Q0 0 4 0H24Q27.4 0 29.6 2.4L34.4 7.6H70Q74 7.6 74 11.6V50H0Z" fill="#f2b62a"/><path d="M0 14.4Q0 10.4 4 10.4H28L33.6 7.6H70Q74 7.6 74 11.6V54Q74 58 70 58H4Q0 58 0 54Z" fill="url(#bfg)"/><defs><linearGradient id="bfgf" x1="0" y1="0" x2="1" y2="1"><stop offset="0" stop-color="#ffe08a"/><stop offset="1" stop-color="#ffcd45"/></linearGradient></defs><rect x="3" y="11.4" width="68" height="27" rx="1.5" fill="#fcd8a0"/><path d="M33 14.8H19.8V27.2M19.8 14.8 35.4 30.4M42.6 14.8H55.8V27.2M55.8 14.8 40.2 30.4" fill="none" stroke="#e9ad1c" stroke-width="4.8" stroke-linecap="round" stroke-linejoin="round"/><path d="M0 37 30 34.4 74 31.4V54Q74 58 70 58H4Q0 58 0 54Z" fill="url(#bfgf)"/></svg>
<div class="a" style="left:1728px;top:967px;width:30px;height:30px;background:#ebebeb;border-radius:3px"></div>
<svg style="left:1732px;top:973px" width="21" height="18" viewBox="0 0 21 18" ><path d="M0 1H21M0 6.2H21M0 11.4H21M0 16.8H21" stroke="#111" stroke-width="1.9"/></svg>
<div class="a" style="left:1765px;top:967px;width:30px;height:30px;background:#f4f4f4;border-radius:3px"></div>
<svg style="left:1770.4px;top:971px" width="20.6" height="21.4" viewBox="0 0 20.6 21.4" ><rect x="1" y="1" width="18.6" height="16" rx="2" fill="#f7f7f7" stroke="#111" stroke-width="2"/><path d="M.4 20.4H20.2" stroke="#111" stroke-width="1.8"/></svg></div></div><div class="a" id="clksh"></div><div class="a" id="clk"><div class="pg" style="left:-1182px;top:-88px"><svg style="left:1211px;top:109px" width="26" height="18.5" viewBox="0 0 26 18.5" ><path d="M.4 .9H25.8M.4 9.2H25.8M.4 17.4H25.8" stroke="#2b2b2b" stroke-width="1.7" stroke-linecap="round"/></svg>
<svg style="left:1281.7px;top:104.8px" width="25.5" height="25" viewBox="0 0 44 44" ><defs><linearGradient id="cka" x1="0" y1="0" x2="0" y2="1"><stop offset="0" stop-color="#8d949b"/><stop offset="1" stop-color="#636b74"/></linearGradient><radialGradient id="cfa" cx=".4" cy=".35" r=".75"><stop offset="0" stop-color="#ffffff"/><stop offset=".7" stop-color="#ededed"/><stop offset="1" stop-color="#cfcfcf"/></radialGradient></defs><path d="M37 4.6 40.4 8" stroke="#4a5058" stroke-width="4.4" stroke-linecap="round"/><path d="M0 44V22Q0 0 22 0Q44 0 44 22V44Z" fill="url(#cka)"/><circle cx="22" cy="21" r="16.6" fill="url(#cfa)"/><path d="M22 22V38" stroke="#e0621a" stroke-width="2.2"/><path d="M22 21 12 15.4M22 21 31.6 11" stroke="#2a2f36" stroke-width="3" stroke-linecap="round"/><circle cx="22" cy="21" r="3.2" fill="#2a2f36"/></svg>
<span class="t" style="left:1332.28px;top:108.92px;font-size:21.00px;color:#1a1a1a;transform:scaleX(1.0136);">Clock</span>
<svg style="left:1555px;top:108.5px" width="15" height="2" viewBox="0 0 15 2" ><path d="M.4 1H14.8" stroke="#111" stroke-width="1.5" stroke-linecap="round"/></svg>
<svg style="left:1624px;top:102px" width="15" height="15" viewBox="0 0 15 15" ><rect x=".8" y=".8" width="13.4" height="13.4" rx="2.4" fill="none" stroke="#111" stroke-width="1.5"/></svg>
<svg style="left:1693.2px;top:102px" width="15" height="15" viewBox="0 0 15 15" ><path d="M.6 .6 14.4 14.4M14.4 .6 .6 14.4" stroke="#111" stroke-width="1.5" stroke-linecap="round"/></svg>
<svg style="left:1590.5px;top:253px" width="25" height="24.5" viewBox="0 0 25 24.5" ><path d="M1 23.6 24 1M14.6 .9H24.1V10.4M1 14.2V23.6H10.4" fill="none" stroke="#222" stroke-width="1.6" stroke-linecap="round" stroke-linejoin="round"/></svg>
<svg style="left:1660.4px;top:253px" width="25" height="24.5" viewBox="0 0 25 24.5" ><path d="M1 6V4.6Q1 .9 4.6 .9H20.4Q24.1 .9 24.1 4.6V20Q24.1 23.6 20.4 23.6H17.6" fill="none" stroke="#222" stroke-width="1.6" stroke-linecap="round"/><path d="M13.6 .9V7.6Q13.6 11.2 17.2 11.2H24.1" fill="none" stroke="#222" stroke-width="1.6"/><path d="M1 23.6 11 13.6M3.8 12.8H11.6V20.6" fill="none" stroke="#222" stroke-width="1.6" stroke-linecap="round" stroke-linejoin="round"/></svg>
<span class="t" style="left:1219.60px;top:295.32px;font-size:105.00px;color:#5e6063;transform:scaleX(0.9332);-webkit-text-stroke:.7px #f6f9fb;">00</span>
<span class="t" style="left:1323.00px;top:275.46px;font-size:104.00px;color:#5e6063;font-family:'Noto Serif CJK SC','Liberation Serif',serif;">:</span>
<span class="t" style="left:1350.80px;top:295.32px;font-size:105.00px;color:#5e6063;transform:scaleX(0.9332);-webkit-text-stroke:.7px #f6f9fb;">00</span>
<span class="t" style="left:1454.50px;top:275.46px;font-size:104.00px;color:#5e6063;font-family:'Noto Serif CJK SC','Liberation Serif',serif;">:</span>
<span class="t" style="left:1481.50px;top:295.32px;font-size:105.00px;color:#5e6063;transform:scaleX(0.9332);-webkit-text-stroke:.7px #f6f9fb;">00</span>
<span class="t" style="left:1586.00px;top:293.69px;font-size:97.00px;color:#5e6063;font-family:'Noto Serif CJK SC','Liberation Serif',serif;">.</span>
<span class="t" style="left:1612.80px;top:321.25px;font-size:74.60px;color:#5e6063;transform:scaleX(0.9520);-webkit-text-stroke:.7px #f6f9fb;">00</span>
<span class="t" style="left:1264.93px;top:399.12px;font-size:21.00px;color:#5f5f5f;transform:scaleX(1.0879);">hr</span>
<span class="t" style="left:1390.23px;top:399.12px;font-size:21.00px;color:#5f5f5f;transform:scaleX(1.0410);">min</span>
<span class="t" style="left:1526.73px;top:399.12px;font-size:21.00px;color:#5f5f5f;transform:scaleX(0.9401);">sec</span>
<div class="a" style="left:1344px;top:460px;width:62px;height:62px;border-radius:50%;background:#0067c0"></div>
<svg style="left:1366px;top:479.5px" width="21" height="23" viewBox="0 0 21 23" ><path d="M2 3.2Q2 .6 4.3 1.8L18.6 9.6Q20.8 11.5 18.6 13.4L4.3 21.2Q2 22.4 2 19.8Z" fill="#fff"/></svg>
<div class="a" style="left:1429px;top:461px;width:60px;height:60px;border-radius:50%;background:#fafbfc;border:1.5px solid #e4e5e7"></div>
<svg style="left:1451.6px;top:484.6px" width="20" height="22" viewBox="0 0 20 22" ><path d="M1 .6H19L14.4 7.4 19 14.2H1Z" fill="#9b9b9b"/><path d="M1 .6V21.4" stroke="#9b9b9b" stroke-width="1.6"/></svg>
<div class="a" style="left:1513.5px;top:461px;width:60px;height:60px;border-radius:50%;background:#fafbfc;border:1.5px solid #e4e5e7"></div>
<svg style="left:1533px;top:480.6px" width="22" height="23" viewBox="0 0 22 23" ><path d="M4.4 9.2A8.7 8.7 0 1 1 4 16.6" fill="none" stroke="#9b9b9b" stroke-width="1.5" stroke-linecap="round"/><path d="M7.2 1 1.8 5.4 8 8.4" fill="none" stroke="#9b9b9b" stroke-width="1.5" stroke-linecap="round" stroke-linejoin="round"/></svg></div></div><div class="a" id="tb"><div class="pg" style="left:0;top:-1118px"><svg style="left:35.8px;top:1136.7px" width="38.4" height="38.7" viewBox="0 0 38.4 38.7" ><defs><linearGradient id="mn1" x1=".7" y1="0" x2=".3" y2="1"><stop offset="0" stop-color="#f9c52e"/><stop offset=".5" stop-color="#f5a623"/><stop offset="1" stop-color="#ee8526"/></linearGradient></defs><path d="M25.6 .2Q37.6 7.2 38.3 19.4Q38.4 31.6 27 36.8Q15.4 41.6 5.6 34.4Q1.6 30.8 .2 25.2Q12.4 28.4 20.6 19.4Q26.8 11.6 25.6 .2Z" fill="url(#mn1)"/></svg>
<span class="t" style="left:88.13px;top:1133.02px;font-size:21.00px;color:#fff;transform:scaleX(0.9426);">12°C</span>
<span class="t" style="left:88.13px;top:1160.97px;font-size:21.00px;color:#e2e5ea;transform:scaleX(1.0008);">Clear</span>
<svg style="left:746.8px;top:1138.6px" width="41" height="40.4" viewBox="0 0 41 40.4" ><defs><linearGradient id="st1" x1="0" y1="0" x2="1" y2="1"><stop offset="0" stop-color="#7be0fb"/><stop offset="1" stop-color="#1f9cf0"/></linearGradient></defs><path d="M0 0H19.4V19.2H0ZM21.6 0H41V19.2H21.6ZM0 21.2H19.4V40.4H0ZM21.6 21.2H41V40.4H21.6Z" fill="url(#st1)"/></svg>
<svg style="left:825px;top:1140.5px" width="42.4" height="36.7" viewBox="0 0 29 25" ><defs><linearGradient id="fe3" x1="0" y1="0" x2="0" y2="1"><stop offset="0" stop-color="#ffd75a"/><stop offset="1" stop-color="#f6b930"/></linearGradient><linearGradient id="fe4" x1="0" y1="0" x2="0" y2="1"><stop offset="0" stop-color="#3a9be8"/><stop offset="1" stop-color="#0f62b4"/></linearGradient></defs><path d="M0 2.2Q0 .6 1.6 .6H9.2Q10.4 .6 11.3 1.6L13.4 3.9H27.2Q29 3.9 29 5.6V25H0Z" fill="#e9a520"/><path d="M0 7.2Q0 5.6 1.6 5.6H10.4L13.2 3.9H27.4Q29 3.9 29 5.5V23.4Q29 25 27.4 25H1.6Q0 25 0 23.4Z" fill="url(#fe3)"/><path d="M5 25V18.6Q5 15.4 8.2 15.4H20.8Q24 15.4 24 18.6V25Z" fill="url(#fe4)"/><rect x="8.6" y="19.2" width="11.8" height="2.4" rx="1.2" fill="#0b4f97"/></svg>
<svg style="left:901.5px;top:1136.8px" width="42.5" height="42.2" viewBox="0 0 42.5 42.2" ><defs><linearGradient id="ed1" x1="0" y1="0" x2="1" y2="1"><stop offset="0" stop-color="#2fa5ea"/><stop offset="1" stop-color="#0c4fa0"/></linearGradient><linearGradient id="ed2" x1="0" y1="1" x2="1" y2="0"><stop offset="0" stop-color="#2bb4e8"/><stop offset=".55" stop-color="#3fc6a0"/><stop offset="1" stop-color="#6ed45a"/></linearGradient><linearGradient id="ed3" x1="0" y1="0" x2="1" y2="1"><stop offset="0" stop-color="#1a76c8"/><stop offset="1" stop-color="#0b3f8a"/></linearGradient></defs><circle cx="21.2" cy="21.1" r="21" fill="url(#ed1)"/><path d="M1 16Q4.6 1.2 21.2 .1Q37 .4 41.8 14.6Q43.6 22.4 38.6 27.4Q32.6 31.6 26.6 28.6Q23.4 26.4 24.6 22.8Q27.6 19.6 25 15.4Q21 11 14.6 12.6Q6.4 15 5 24Q2.2 20.6 1 16Z" fill="url(#ed2)"/><path d="M14.6 12.6Q6 15.6 5 24Q5 35.4 16.6 41.4Q25 43.4 32.6 38.6Q22.6 40.4 17.6 32.6Q13.6 24.6 19.6 18.6Q22.6 16 25.4 16Q21.4 10.8 14.6 12.6Z" fill="url(#ed3)"/><path d="M24.6 22.8Q23.2 26.6 26.6 28.6Q32.6 31.6 38.8 27.2Q35 36.6 26 36.6Q20 35.8 18.6 29.6Q18.4 24 22.6 21.4Q24 20.8 24.6 22.8Z" fill="#0d3f86" opacity=".55"/></svg>
<svg style="left:980.4px;top:1138px" width="39.2" height="39" viewBox="0 0 39.2 39" ><defs><linearGradient id="ga1" x1="0" y1="0" x2="0" y2="1"><stop offset="0" stop-color="#596b86"/><stop offset="1" stop-color="#3c4a63"/></linearGradient></defs><rect x=".8" y=".8" width="37.6" height="37.4" rx="4" fill="url(#ga1)" stroke="#7f93b8" stroke-width="1.4"/><path d="M.8 9.6H19.4V4Q19.4 .8 22.6 .8" fill="none" stroke="#7f93b8" stroke-width="1.2"/><rect x="21" y="2.6" width="15.4" height="6.2" rx="1" fill="#1e2f4c"/><rect x="3.4" y="4.4" width="9.6" height="2.2" rx="1" fill="#c8d6f0"/><rect x="24" y="4.8" width="9.4" height="1.6" fill="#7fa0d8"/></svg>
<span class="t" style="left:990.60px;top:1149.74px;font-size:27.00px;color:#c2d6f8;transform:scaleX(0.9517);font-weight:bold;">G</span>
<svg style="left:1055.4px;top:1138px" width="22" height="19" viewBox="0 0 29 25" ><defs><linearGradient id="fe5" x1="0" y1="0" x2="0" y2="1"><stop offset="0" stop-color="#ffd75a"/><stop offset="1" stop-color="#f6b930"/></linearGradient><linearGradient id="fe6" x1="0" y1="0" x2="0" y2="1"><stop offset="0" stop-color="#3a9be8"/><stop offset="1" stop-color="#0f62b4"/></linearGradient></defs><path d="M0 2.2Q0 .6 1.6 .6H9.2Q10.4 .6 11.3 1.6L13.4 3.9H27.2Q29 3.9 29 5.6V25H0Z" fill="#e9a520"/><path d="M0 7.2Q0 5.6 1.6 5.6H10.4L13.2 3.9H27.4Q29 3.9 29 5.5V23.4Q29 25 27.4 25H1.6Q0 25 0 23.4Z" fill="url(#fe5)"/><path d="M5 25V18.6Q5 15.4 8.2 15.4H20.8Q24 15.4 24 18.6V25Z" fill="url(#fe6)"/><rect x="8.6" y="19.2" width="11.8" height="2.4" rx="1.2" fill="#0b4f97"/></svg>
<svg style="left:1076.8px;top:1157.6px" width="21.4" height="20.4" viewBox="0 0 28 28" ><defs><linearGradient id="gg3" x1="0" y1="0" x2="0" y2="1"><stop offset="0" stop-color="#aab0b8"/><stop offset="1" stop-color="#8a9098"/></linearGradient><radialGradient id="gg4" cx=".4" cy=".35" r=".8"><stop offset="0" stop-color="#2f86dd"/><stop offset="1" stop-color="#0f4fa8"/></radialGradient></defs><path d="M11.37 3.94 L11.79 0.58 L16.21 0.58 L16.63 3.94 L19.26 5.03 L21.92 2.95 L25.05 6.08 L22.97 8.74 L24.06 11.37 L27.42 11.79 L27.42 16.21 L24.06 16.63 L22.97 19.26 L25.05 21.92 L21.92 25.05 L19.26 22.97 L16.63 24.06 L16.21 27.42 L11.79 27.42 L11.37 24.06 L8.74 22.97 L6.08 25.05 L2.95 21.92 L5.03 19.26 L3.94 16.63 L0.58 16.21 L0.58 11.79 L3.94 11.37 L5.03 8.74 L2.95 6.08 L6.08 2.95 L8.74 5.03Z" fill="url(#gg3)" stroke="url(#gg3)" stroke-width="1.6" stroke-linejoin="round"/><circle cx="14" cy="14" r="7.4" fill="#eef2f6"/><circle cx="14" cy="14" r="5.4" fill="url(#gg4)"/></svg>
<div class="a" style="left:1119.2px;top:1123px;width:69.6px;height:69.8px;background:#24374f;border-radius:7px;border:1px solid #2e4159"></div>
<svg style="left:1132.2px;top:1136px" width="43" height="43" viewBox="0 0 44 44" ><defs><linearGradient id="ckb" x1="0" y1="0" x2="0" y2="1"><stop offset="0" stop-color="#8d949b"/><stop offset="1" stop-color="#636b74"/></linearGradient><radialGradient id="cfb" cx=".4" cy=".35" r=".75"><stop offset="0" stop-color="#ffffff"/><stop offset=".7" stop-color="#ededed"/><stop offset="1" stop-color="#cfcfcf"/></radialGradient></defs><path d="M37 4.6 40.4 8" stroke="#4a5058" stroke-width="4.4" stroke-linecap="round"/><path d="M0 44V22Q0 0 22 0Q44 0 44 22V44Z" fill="url(#ckb)"/><circle cx="22" cy="21" r="16.6" fill="url(#cfb)"/><path d="M22 22V38" stroke="#e0621a" stroke-width="2.2"/><path d="M22 21 12 15.4M22 21 31.6 11" stroke="#2a2f36" stroke-width="3" stroke-linecap="round"/><circle cx="22" cy="21" r="3.2" fill="#2a2f36"/></svg>
<div class="a" style="left:917.9px;top:1186px;width:11.2px;height:4.8px;background:#8d939c;border-radius:2.4px"></div>
<div class="a" style="left:994.7px;top:1186px;width:11.2px;height:4.8px;background:#8d939c;border-radius:2.4px"></div>
<div class="a" style="left:1071.6px;top:1186px;width:11.2px;height:4.8px;background:#8d939c;border-radius:2.4px"></div>
<div class="a" style="left:1140px;top:1186px;width:28px;height:4.8px;background:#4cc2ff;border-radius:2.4px"></div>
<svg style="left:1520px;top:1152px" width="20" height="11.6" viewBox="0 0 20 11.6" ><path d="M1.2 10.4 10 1.6 18.8 10.4" fill="none" stroke="#fff" stroke-width="2.1" stroke-linecap="round" stroke-linejoin="round"/></svg>
<span class="t" style="left:1575.93px;top:1148.82px;font-size:21.00px;color:#fff;transform:scaleX(0.9300);">ENG</span>
<svg style="left:1649px;top:1144.4px" width="28" height="27.5" viewBox="0 0 28 27.5" ><path d="M19 1H3.4Q1 1 1 3.4V17Q1 19.4 3.4 19.4H19" fill="none" stroke="#fff" stroke-width="1.7" stroke-linecap="round"/><path d="M9.6 19.6V25.4M15 19.6V25.4M5.4 26H19.4" fill="none" stroke="#fff" stroke-width="1.7" stroke-linecap="round"/><rect x="19.6" y=".9" width="7.4" height="10.4" rx="2" fill="#13263f" stroke="#fff" stroke-width="1.7"/><path d="M21.6 4.6H25" stroke="#fff" stroke-width="1.5"/><path d="M23.4 11.4V26.6" stroke="#fff" stroke-width="1.7" stroke-linecap="round"/></svg>
<svg style="left:1690.8px;top:1147.4px" width="28.7" height="22.6" viewBox="0 0 28.7 22.6" ><path d="M1 7.4H5.6L11.8 1.4V21.2L5.6 15.2H1Z" fill="none" stroke="#fff" stroke-width="1.7" stroke-linejoin="round"/><path d="M15.8 6.8Q18.6 11.3 15.8 15.8" fill="none" stroke="#fff" stroke-width="1.7" stroke-linecap="round"/><path d="M20 3.6Q24.6 11.3 20 19" fill="none" stroke="#8c96a4" stroke-width="1.6" stroke-linecap="round"/><path d="M24 .8Q30.6 11.3 24 21.8" fill="none" stroke="#5d6a7c" stroke-width="1.6" stroke-linecap="round"/></svg>
<span class="t" style="left:1756.53px;top:1133.42px;font-size:21.00px;color:#fff;transform:scaleX(0.9838);">12:00 PM</span>
<span class="t" style="left:1747.13px;top:1160.52px;font-size:21.00px;color:#fff;transform:scaleX(1.0470);">5/10/2023</span>
<svg style="left:1859.2px;top:1145.5px" width="24.2" height="25.2" viewBox="0 0 24.2 25.2" ><path d="M12.6 3.6Q5.2 3 4.6 10.8V15.4L1.6 19.6H17.8L15 15.6" fill="none" stroke="#fff" stroke-width="1.7" stroke-linecap="round" stroke-linejoin="round"/><path d="M6.8 20.4Q9.8 26 12.8 20.4" fill="none" stroke="#fff" stroke-width="1.7" stroke-linecap="round"/><path d="M9.4 8.2H14L9.4 13.6H14.2" fill="none" stroke="#fff" stroke-width="1.6" stroke-linecap="round" stroke-linejoin="round"/><path d="M17.2 1H22.6L17.2 7.2H23" fill="none" stroke="#fff" stroke-width="1.6" stroke-linecap="round" stroke-linejoin="round"/></svg></div></div><svg style="left:1449.5px;top:119.5px" width="22" height="33" viewBox="0 0 22 33" ><path d="M1 1V26.4L6.8 21 11.2 31.2 15.6 29.2 11.2 19.4H19.6Z" fill="#fff" stroke="#1a1a1a" stroke-width="1.3" stroke-linejoin="miter"/></svg></body></html>
